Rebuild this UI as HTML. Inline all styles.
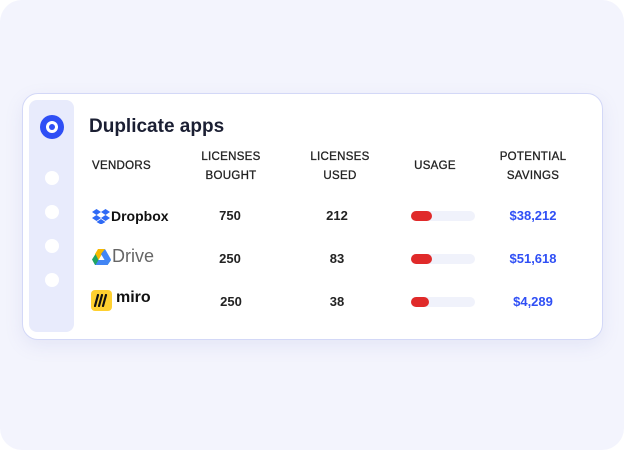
<!DOCTYPE html>
<html><head><style>
*{margin:0;padding:0;box-sizing:border-box}
body{width:624px;height:450px;background:#fff;font-family:"Liberation Sans",sans-serif;position:relative;overflow:hidden}
.bg{position:absolute;left:0;top:0;width:624px;height:450px;background:#f3f4fd;border-radius:22px}
.card{position:absolute;left:22px;top:93px;width:581px;height:247px;background:#fff;border:1px solid #d3d8f7;border-radius:16px;box-shadow:0 6px 18px rgba(120,130,200,.12)}
.side{position:absolute;left:29px;top:100px;width:45px;height:232px;background:#e8ebfc;border-radius:8px}
.dot{position:absolute;left:45px;width:14px;height:14px;border-radius:50%;background:#fff}
.tgt{position:absolute;left:40px;top:115px;width:24px;height:24px;border-radius:50%;background:#2f4ff5}
.tgt:after{content:"";position:absolute;left:6px;top:6px;width:12px;height:12px;border-radius:50%;background:#fff}
.tgt:before{content:"";position:absolute;left:9px;top:9px;width:6px;height:6px;border-radius:50%;background:#2f4ff5;z-index:2}
.t{position:absolute;color:#1b1f33}
.h{font-size:11.5px;text-align:center;line-height:19px;letter-spacing:.3px;color:#222;-webkit-text-stroke:.3px #222}
.n{font-size:13px;font-weight:bold;text-align:center;width:60px;color:#222}
.bar{position:absolute;left:411px;width:64px;height:10px;border-radius:5px;background:#f0f2fb}
.bar i{position:absolute;left:0;top:0;width:21px;height:10px;border-radius:5px;background:#e02a2a}
.s{font-size:13px;font-weight:bold;color:#2f4ff5;text-align:center;width:80px}
</style></head><body>
<div class="bg"></div>
<div class="card"></div>
<div class="side"></div>
<div class="tgt"></div>
<div class="dot" style="top:171px"></div>
<div class="dot" style="top:205px"></div>
<div class="dot" style="top:239px"></div>
<div class="dot" style="top:273px"></div>
<div class="t" style="left:89px;top:116px;font-size:19px;font-weight:bold">Duplicate apps</div>
<div class="t h" style="left:92px;top:157px">VENDORS</div>
<div class="t h" style="left:196px;top:148px;width:70px">LICENSES<br>BOUGHT</div>
<div class="t h" style="left:305px;top:148px;width:70px">LICENSES<br>USED</div>
<div class="t h" style="left:405px;top:157px;width:60px">USAGE</div>
<div class="t h" style="left:493px;top:148px;width:80px">POTENTIAL<br>SAVINGS</div>

<svg style="position:absolute;left:92px;top:209px" width="18" height="15" viewBox="0 0 18 15"><g fill="#2f6af5"><path d="M4.5 0 0 3l4.5 3L9 3z"/><path d="M13.5 0 9 3l4.5 3L18 3z"/><path d="M0 9l4.5 3L9 9 4.5 6z"/><path d="M13.5 6 9 9l4.5 3L18 9z"/><path d="M4.5 13 9 15.5l4.5-2.5L9 10z"/></g></svg>
<div class="t" style="left:111px;top:208px;font-size:14px;font-weight:bold;color:#111">Dropbox</div>
<svg style="position:absolute;left:92px;top:249px" width="19" height="16" viewBox="0 0 19 16"><path d="M6 0h7l-6.5 11L3 5z" fill="#f7b900"/><path d="M13 0l6 10.5-3.5 5.5L9 5z" fill="#2f7af5" opacity=".9"/><path d="M0 10.5 3.5 5 6.5 11H19l-3.5 5H3z" fill="#1fa463"/><path d="M6.5 11H19l-3.5 5H3.5z" fill="#4285f4"/></svg>
<div class="t" style="left:112px;top:246px;font-size:18px;color:#666">Drive</div>
<div style="position:absolute;left:91px;top:290px;width:21px;height:21px;border-radius:4px;background:#ffd02f"></div>
<svg style="position:absolute;left:94px;top:294px" width="15" height="13" viewBox="0 0 15 13"><g stroke="#111" stroke-width="2.2" stroke-linecap="round"><path d="M4 1 1 12M8 1 5 12M12 1 9 12"/></g></svg>
<div class="t" style="left:116px;top:289px;font-size:16px;font-weight:bold;color:#111">miro</div>

<div class="t n" style="left:200px;top:208px">750</div>
<div class="t n" style="left:200px;top:251px">250</div>
<div class="t n" style="left:201px;top:294px">250</div>
<div class="t n" style="left:307px;top:208px">212</div>
<div class="t n" style="left:307px;top:251px">83</div>
<div class="t n" style="left:307px;top:294px">38</div>
<div class="bar" style="top:211px"><i></i></div>
<div class="bar" style="top:254px"><i></i></div>
<div class="bar" style="top:297px"><i style="width:18px"></i></div>
<div class="t s" style="left:493px;top:208px">$38,212</div>
<div class="t s" style="left:493px;top:251px">$51,618</div>
<div class="t s" style="left:493px;top:294px">$4,289</div>
</body></html>
